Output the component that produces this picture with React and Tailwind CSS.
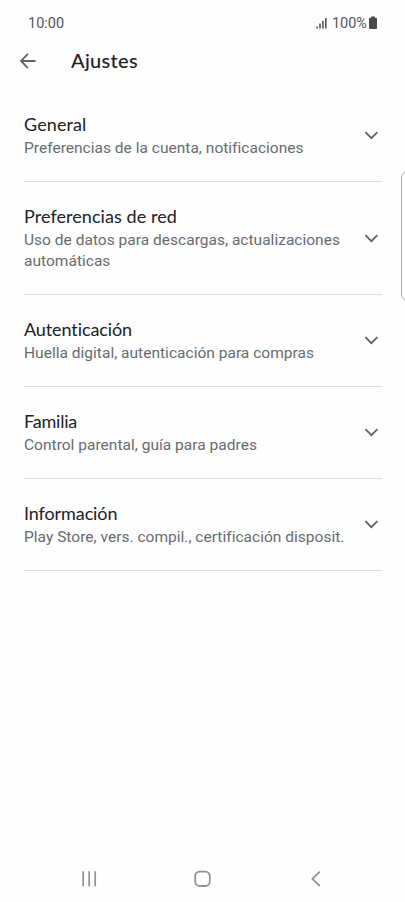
import React, { useState } from "react";

const sections = [
  { title: "General", tracking: "tracking-[0.1px]", description: "Preferencias de la cuenta, notificaciones" },
  {
    title: "Preferencias de red",
    tracking: "tracking-[0.06px]",
    description: "Uso de datos para descargas, actualizaciones automáticas",
  },
  { title: "Autenticación", tracking: "tracking-[-0.1px]", description: "Huella digital, autenticación para compras" },
  { title: "Familia", tracking: "tracking-[-0.2px]", description: "Control parental, guía para padres" },
  { title: "Información", tracking: "tracking-[-0.1px]", description: "Play Store, vers. compil., certificación disposit." },
];

const StatusBar = () => (
  <div className="flex h-[46px] items-center justify-between pl-[28px] pr-[28px] text-[14.5px] text-[#555]">
    <span className="mt-[2px]">10:00</span>
    <div className="flex items-center">
      <svg className="-mt-px" width="12" height="12" viewBox="0 0 12 12" fill="#555">
        <rect x="0.3" y="9.5" width="1.6" height="2" />
        <rect x="3.2" y="6.5" width="1.6" height="5" />
        <rect x="6.1" y="3.8" width="1.6" height="7.7" />
        <rect x="9" y="1" width="1.6" height="10.5" />
      </svg>
      <span className="mt-[2px] ml-1">100%</span>
      <svg className="-mt-[2px] ml-[2px]" width="8" height="13" viewBox="0 0 8 13" fill="#4a4a4a">
        <path d="M2.2 0.5h3.6v1.3H7a1 1 0 0 1 1 1V12a1 1 0 0 1-1 1H1a1 1 0 0 1-1-1V2.8a1 1 0 0 1 1-1h1.2z" />
      </svg>
    </div>
  </div>
);

const Section = ({ section }) => {
  const [open, setOpen] = useState(false);

  return (
    <button
      onClick={() => setOpen(!open)}
      aria-expanded={open}
      className="flex w-full items-center justify-between border-b border-[#dcdcdc] pt-[22px] pb-[22px] text-left"
    >
      <div className="w-[325px]">
        <h2 className={`font-[Lato,sans-serif] text-[18px] leading-[25px] text-[#202124] ${section.tracking}`}>
          {section.title}
        </h2>
        <p className="mt-px w-[325px] text-[15.5px] leading-[21px] tracking-[0.02px] text-[#676b70]">
          {section.description}
        </p>
      </div>
      <svg
        className="mr-[3px] shrink-0"
        width="14"
        height="9"
        viewBox="0 0 14 9"
        fill="none"
        stroke="#5f6368"
        strokeWidth="1.8"
      >
        <path d="M0.4 1.2L6.4 7.2L12.4 1.2" />
      </svg>
    </button>
  );
};

const App = () => {
  return (
    <div className="relative flex h-[902px] w-[405px] flex-col overflow-hidden bg-[#fefefe] font-[Roboto,sans-serif]">
      <StatusBar />

      {/* Header */}
      <header className="flex h-[44px] items-start pl-[20px]">
        <svg className="mt-[7px]" width="16" height="16" viewBox="0 0 16 16" fill="none" stroke="#5f6368" strokeWidth="1.8">
          <path d="M15.5 8H1.2M7.9 0.9L0.9 8L7.9 15.1" />
        </svg>
        <h1 className="ml-[35px] font-[Lato,sans-serif] text-[20px] font-medium leading-[28px] tracking-[0.3px] text-[#202124]">
          Ajustes
        </h1>
      </header>

      {/* Settings */}
      <main className="flex-1 pl-6 pr-[23px]">
        {sections.map((section) => (
          <Section key={section.title} section={section} />
        ))}
      </main>

      {/* Navigation bar */}
      <nav className="flex h-[47px] items-start justify-between pl-[82px] pr-[84px]">
        <svg width="15" height="48" viewBox="0 0 15 48" fill="none" stroke="#919191" strokeWidth="1.7">
          <path d="M1.2 16.2v15M7.2 16.2v15M13.2 16.2v15" />
        </svg>
        <svg className="mr-1" width="17" height="48" viewBox="0 0 17 48" fill="none" stroke="#919191" strokeWidth="1.8">
          <rect x="1.2" y="16.6" width="14.6" height="14.4" rx="4.5" />
        </svg>
        <svg width="10" height="48" viewBox="0 0 10 48" fill="none" stroke="#919191" strokeWidth="1.8">
          <path d="M8.8 16.6L1.4 23.8L8.8 31" />
        </svg>
      </nav>

      {/* Edge panel handle */}
      <div className="absolute top-[172px] -right-[6px] h-[128px] w-[10px] rounded-[5px] border border-[#aaa]" />
    </div>
  );
};

export default App;
